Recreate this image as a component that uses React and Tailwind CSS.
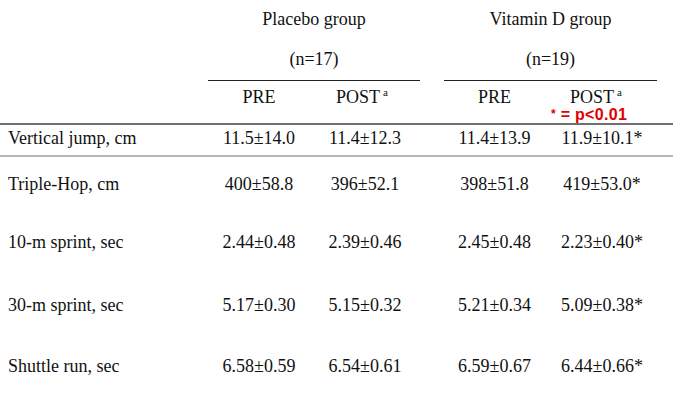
import React from 'react'

const rows = [
    { label: 'Vertical jump, cm', vals: ['11.5±14.0', '11.4±12.3', '11.4±13.9', '11.9±10.1*'] },
    { label: 'Triple-Hop, cm', vals: ['400±58.8', '396±52.1', '398±51.8', '419±53.0*'] },
    { label: '10-m sprint, sec', vals: ['2.44±0.48', '2.39±0.46', '2.45±0.48', '2.23±0.40*'] },
    { label: '30-m sprint, sec', vals: ['5.17±0.30', '5.15±0.32', '5.21±0.34', '5.09±0.38*'] },
    { label: 'Shuttle run, sec', vals: ['6.58±0.59', '6.54±0.61', '6.59±0.67', '6.44±0.66*'] },
]

const cols = 'grid grid-cols-[208px_102px_110px_24px_101px_112px_16px]'

const Post = () => (
    <span>
        POST<sup className="text-[11px] ml-[3px] relative -top-[7px]">a</sup>
    </span>
)

const DataRow = ({ row, className }) => (
    <div className={`${cols} ${className}`}>
        <div className="pl-[8px] leading-[20px]">{row.label}</div>
        <div className="text-center leading-[20px]">{row.vals[0]}</div>
        <div className="text-center leading-[20px]">{row.vals[1]}</div>
        <div></div>
        <div className="text-center leading-[20px]">{row.vals[2]}</div>
        <div className="text-center leading-[20px] pl-[2px]">{row.vals[3]}</div>
        <div></div>
    </div>
)

const App = () => {
    return (
        <div className="w-[673px] h-[401px] bg-white text-[#111] text-[18px] font-['Liberation_Serif',serif] overflow-hidden">
            {/* group headers */}
            <div className={cols}>
                <div></div>
                <div className="col-span-2 flex flex-col">
                    <div className="h-[38px] flex items-center justify-center">Placebo group</div>
                    <div className="h-[43px] flex items-center justify-center border-b border-[#222]">(n=17)</div>
                </div>
                <div></div>
                <div className="col-span-2 flex flex-col">
                    <div className="h-[38px] flex items-center justify-center">Vitamin D group</div>
                    <div className="h-[43px] flex items-center justify-center border-b border-[#222]">(n=19)</div>
                </div>
                <div></div>
            </div>

            {/* PRE / POST */}
            <div className={`${cols} h-[44px] border-b-2 border-[#707070]`}>
                <div></div>
                <div className="text-center pt-[6px] leading-[20px]">PRE</div>
                <div className="text-center pt-[6px] leading-[20px] pr-[6px]">
                    <Post />
                </div>
                <div></div>
                <div className="text-center pt-[6px] leading-[20px]">PRE</div>
                <div className="flex flex-col items-center pt-[6px] pr-[10px]">
                    <div className="leading-[20px]">
                        <Post />
                    </div>
                    <div className="font-['Liberation_Sans',sans-serif] font-bold text-[16px] leading-[16px] text-[#e10000] -ml-[14px] tracking-[0.3px]">
                        <span className="text-[12px] relative -top-[2px]">*</span> = p&lt;0.01
                    </div>
                </div>
                <div></div>
            </div>

            <DataRow row={rows[0]} className="h-[32px] pt-[3px] border-b-2 border-[#b8b8b8]" />
            <DataRow row={rows[1]} className="h-[58px] pt-[17px]" />
            <DataRow row={rows[2]} className="h-[63px] pt-[17px]" />
            <DataRow row={rows[3]} className="h-[61px] pt-[17px]" />
            <DataRow row={rows[4]} className="h-[62px] pt-[17px]" />
        </div>
    )
}

export default App
